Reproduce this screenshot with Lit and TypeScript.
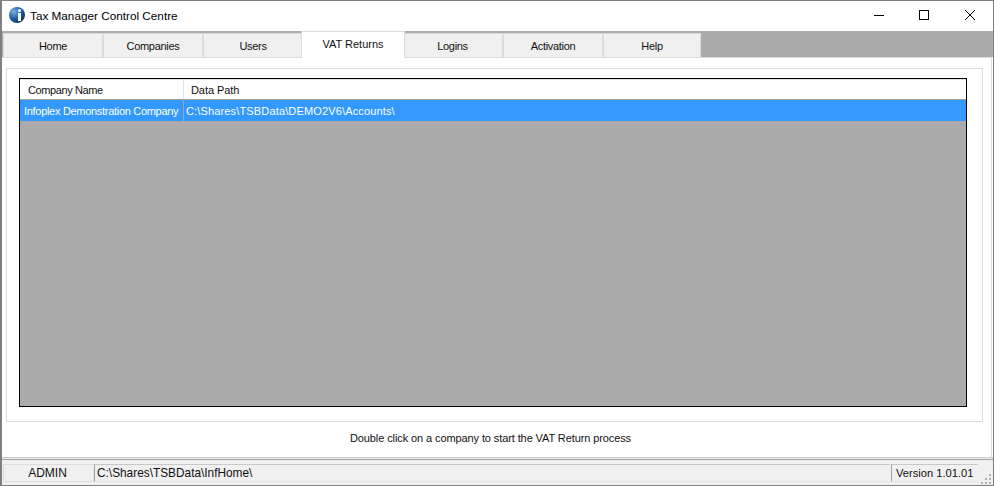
import { LitElement, html, css } from "lit";
import { customElement } from "lit/decorators.js";

@customElement("app-root")
export class AppRoot extends LitElement {
  static styles = css`
    :host { display: block; width: 994px; height: 486px; font-family: "Liberation Sans", Arial, sans-serif; font-size: 11px; color: #111; }
    * { box-sizing: border-box; }
    .win { width: 994px; height: 486px; display: flex; flex-direction: column; background: #fff; border: 1px solid #7f7f7f; border-left-width: 2px; }
    .title { height: 30px; flex: none; display: flex; align-items: center; padding-left: 6px; background: #fff; }
    .logo { flex: none; margin-bottom: 2px; }
    .title .t { margin-left: 4px; margin-bottom: 2px; font-size: 11.75px; color: #000; }
    .caps { margin-left: auto; display: flex; align-self: stretch; padding-bottom: 2px; }
    .cap { width: 46px; display: flex; align-items: center; justify-content: center; }
    .cap.min { padding-left: 2px; }
    .band { height: 26px; flex: none; background: #ababab; display: flex; align-items: flex-end; padding-left: 1px; }
    .tab { width: 100px; height: 24px; background: #f0f0f0; border: 1px solid #dcdcdc; border-bottom: none; display: flex; align-items: center; justify-content: center; padding-top: 1px; letter-spacing: -0.3px; }
    .tab.sel { height: 27px; width: 104px; background: #fff; margin: 0 -2px -1px -2px; position: relative; padding-top: 0; padding-bottom: 3px; z-index: 1; letter-spacing: 0; }
    .tab.after { padding-right: 1px; }
    .tab.last { width: 98px; }
    .page { height: 400px; flex: none; margin-right: 1px; border-top: 1px solid #dcdcdc; border-right: 1px solid #dcdcdc; padding: 10px 0 0 4px; }
    .group { height: 354px; width: 977px; border: 1px solid #dcdcdc; padding: 9px 15px 14px 12px; }
    .list { height: 329px; width: 948px; border: 1px solid #000; background: #ababab; display: flex; flex-direction: column; }
    .head { height: 21px; flex: none; display: flex; align-items: center; background: #fff; border-top: 1px solid #e3e3e3; border-bottom: 1px solid #a0a0a0; }
    .head .c1 { width: 164px; padding-left: 8px; border-right: 1px solid #e3e3e3; align-self: stretch; display: flex; align-items: center; letter-spacing: -0.4px; }
    .head .c2 { padding-left: 7px; letter-spacing: -0.07px; }
    .row { height: 21px; flex: none; width: 946px; display: flex; align-items: center; background: #3399ff; color: #fff; }
    .row .c1 { width: 164px; padding-left: 4px; border-right: 1px solid #a3a3a3; align-self: stretch; display: flex; align-items: center; white-space: nowrap; letter-spacing: -0.3px; }
    .row .c2 { padding-left: 2px; letter-spacing: 0.15px; }
    .hint { height: 35px; padding: 0 16px 3px 0; display: flex; align-items: center; justify-content: center; letter-spacing: -0.1px; }
    .rule { height: 3px; flex: none; border-top: 1px solid #c8c8c8; border-bottom: 1px solid #a0a0a0; background: #f0f0f0; }
    .status { flex: 1; background: #f0f0f0; display: flex; padding: 4px 0 0 1px; align-items: flex-start; position: relative; font-size: 12px; }
    .cell { height: 18px; display: flex; align-items: center; white-space: nowrap; }
    .admin { width: 91px; justify-content: center; padding-right: 2px; border: 1px solid #dcdcdc; border-right-color: #e4e4e4; }
    .path { width: 796px; padding-left: 2px; font-size: 11.85px; border-top: 1px solid #c8c8c8; border-left: 1px solid #a0a0a0; border-bottom: 1px solid #e4e4e4; }
    .ver { width: 87px; margin-left: 1px; padding-left: 4px; font-size: 11.15px; border-top: 1px solid #c8c8c8; border-left: 1px solid #a0a0a0; border-bottom: 1px solid #e4e4e4; }
    .grip { position: absolute; right: 1px; bottom: 1px; }
  `;

  render() {
    return html`<div class="win">
      <div class="title">
        <svg class="logo" width="18" height="18" viewBox="0 0 18 18">
          <defs><radialGradient id="g" cx="0.3" cy="0.3" r="0.85"><stop offset="0" stop-color="#7fb2e6"/><stop offset="0.5" stop-color="#1f5da6"/><stop offset="1" stop-color="#0c2c5c"/></radialGradient></defs>
          <circle cx="9" cy="9" r="8" fill="url(#g)"/>
          <rect x="10" y="7" width="3" height="8" fill="#fff"/>
          <circle cx="11.5" cy="4.6" r="1.6" fill="#fff"/>
        </svg>
        <span class="t">Tax Manager Control Centre</span>
        <div class="caps">
          <div class="cap min"><svg width="10" height="10" viewBox="0 0 10 10"><path d="M0 5.5h10" stroke="#000" fill="none"/></svg></div>
          <div class="cap"><svg width="10" height="10" viewBox="0 0 10 10"><rect x=".5" y=".5" width="9" height="9" stroke="#000" fill="none"/></svg></div>
          <div class="cap"><svg width="10" height="10" viewBox="0 0 10 10"><path d="M0 0L10 10M10 0L0 10" stroke="#000" fill="none"/></svg></div>
        </div>
      </div>
      <div class="band">
        <div class="tab">Home</div>
        <div class="tab">Companies</div>
        <div class="tab">Users</div>
        <div class="tab sel">VAT Returns</div>
        <div class="tab after">Logins</div>
        <div class="tab">Activation</div>
        <div class="tab last">Help</div>
      </div>
      <div class="page">
        <div class="group">
          <div class="list">
            <div class="head"><div class="c1">Company Name</div><div class="c2">Data Path</div></div>
            <div class="row"><div class="c1">Infoplex Demonstration Company</div><div class="c2">C:\\Shares\\TSBData\\DEMO2V6\\Accounts\\</div></div>
          </div>
        </div>
        <div class="hint">Double click on a company to start the VAT Return process</div>
      </div>
      <div class="rule"></div>
      <div class="status">
        <div class="cell admin">ADMIN</div>
        <div class="cell path">C:\\Shares\\TSBData\\InfHome\\</div>
        <div class="cell ver">Version 1.01.01</div>
        <svg class="grip" width="12" height="12" viewBox="0 0 12 12" fill="#b0b0b0"><rect x="9" y="2" width="2" height="2"/><rect x="5" y="6" width="2" height="2"/><rect x="9" y="6" width="2" height="2"/><rect x="1" y="10" width="2" height="2"/><rect x="5" y="10" width="2" height="2"/><rect x="9" y="10" width="2" height="2"/></svg>
      </div>
    </div>`;
  }
}
